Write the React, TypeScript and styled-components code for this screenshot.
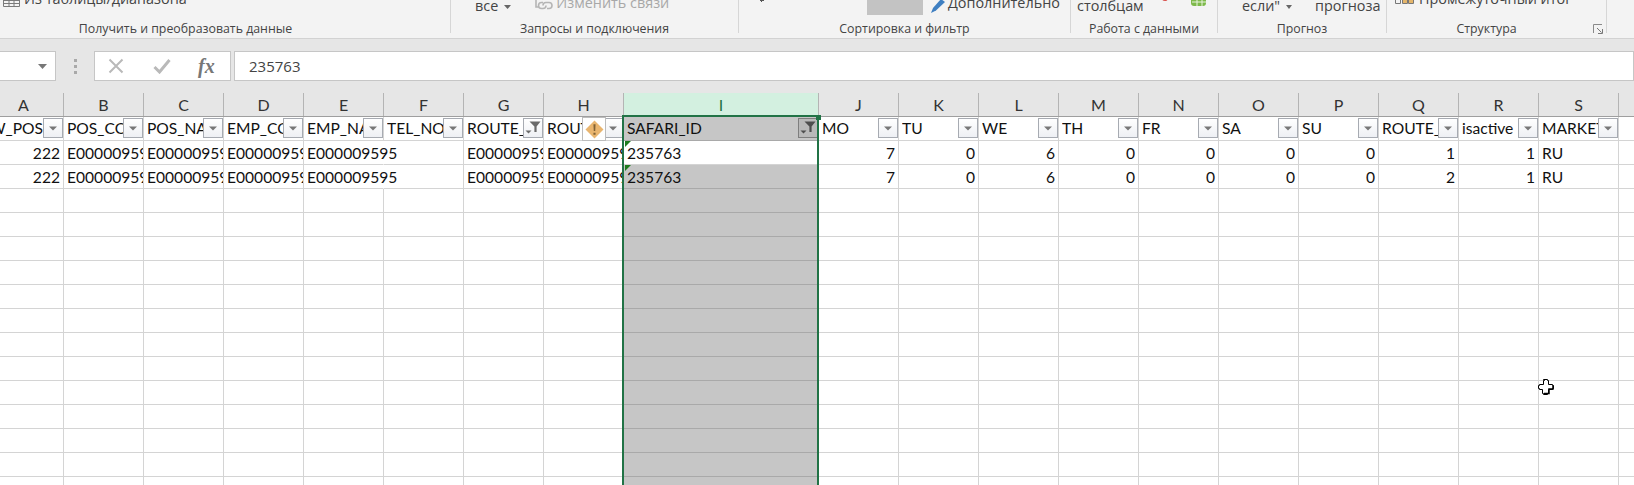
import React from 'react';
import styled, { createGlobalStyle } from 'styled-components';

const Global = createGlobalStyle`
  html, body { margin: 0; padding: 0; background: #fff; overflow: hidden; }
  #root { width: 1634px; height: 485px; overflow: hidden; }
`;

const Page = styled.div`
  width: 1634px;
  height: 485px;
  overflow: hidden;
  display: flex;
  flex-direction: column;
  font-family: "Lato", "Liberation Sans", sans-serif;
`;

/* ---------- ribbon ---------- */
const Ribbon = styled.div`
  flex: none;
  height: 39px;
  box-sizing: border-box;
  background: #f3f3f3;
  border-bottom: 1px solid #d2d2d2;
  display: flex;
  align-items: flex-start;
  overflow: hidden;
  font-family: "Open Sans", "Noto Sans", sans-serif;
  color: #444;
`;

const Group = styled.div<{ $w: number }>`
  flex: none;
  position: relative;
  box-sizing: border-box;
  width: ${(p) => p.$w}px;
  height: 33px;
  display: flex;
  flex-direction: column;
  justify-content: flex-end;
  border-right: 1px solid #d6d6d6;
`;

const GroupRow = styled.div`
  height: 21px;
  flex: none;
  display: flex;
  align-items: flex-end;
  white-space: nowrap;
`;

const GroupLabel = styled.div<{ $pr?: number }>`
  flex: none;
  height: 16px;
  margin-bottom: -4px;
  line-height: 16px;
  font-size: 12.35px;
  text-align: center;
  padding-right: ${(p) => p.$pr ?? 0}px;
`;

const RibbonText = styled.span<{ $ml: number; $mb: number; $muted?: boolean }>`
  margin-left: ${(p) => p.$ml}px;
  margin-bottom: ${(p) => p.$mb}px;
  font-size: 14.4px;
  line-height: 18px;
  color: ${(p) => (p.$muted ? '#a8a8a8' : '#444')};
`;

const RibbonIcon = styled.svg<{ $ml: number; $mb: number }>`
  flex: none;
  display: block;
  margin-left: ${(p) => p.$ml}px;
  margin-bottom: ${(p) => p.$mb}px;
`;

const Swatch = styled.div<{ $ml: number }>`
  flex: none;
  width: 56px;
  height: 30px;
  margin-left: ${(p) => p.$ml}px;
  margin-bottom: 6px;
  background: #c3c3c3;
`;

const Launcher = styled.svg`
  position: absolute;
  left: 206px;
  top: 24px;
`;

/* ---------- formula bar ---------- */
const FormulaArea = styled.div`
  flex: none;
  height: 54px;
  box-sizing: border-box;
  background: #e6e6e6;
  padding-top: 12px;
`;

const FormulaRow = styled.div`
  height: 30px;
  display: flex;
  align-items: stretch;
`;

const FormulaBox = styled.div<{ $w?: number; $ml?: number }>`
  box-sizing: border-box;
  background: #fff;
  border: 1px solid #c6c6c6;
  ${(p) => (p.$w ? `flex: none; width: ${p.$w}px;` : 'flex: 1;')}
  margin-left: ${(p) => p.$ml ?? 0}px;
  display: flex;
  align-items: center;
`;

const NameBox = styled(FormulaBox)`
  border-left: none;
  justify-content: flex-end;
  padding-right: 8px;
`;

const Grip = styled.div`
  flex: none;
  width: 3px;
  margin: 8px 17px 7px 18px;
  background: repeating-linear-gradient(#a9a9a9 0 3px, transparent 3px 6px);
`;

const FormulaButtons = styled(FormulaBox)`
  padding-left: 13px;
  gap: 29px;
`;

const FxGlyph = styled.span`
  font-family: "Liberation Serif", serif;
  font-style: italic;
  font-weight: 700;
  font-size: 20px;
  line-height: 20px;
  color: #777;
  margin-left: -2px;
`;

const FormulaText = styled(FormulaBox)`
  padding-left: 14px;
  font-family: "Open Sans", sans-serif;
  font-size: 15px;
  color: #444;
`;

/* ---------- sheet ---------- */
const COLUMNS = 'repeat(8, 80px) 195px repeat(11, 80px)';

const ColHeaderRow = styled.div`
  flex: none;
  height: 24px;
  box-sizing: border-box;
  margin-left: -16px;
  display: grid;
  grid-template-columns: ${COLUMNS};
  background: #e6e6e6;
  border-bottom: 1px solid #9f9f9f;
`;

const ColHeader = styled.div<{ $active?: boolean }>`
  box-sizing: border-box;
  border-right: 1px solid #b4b4b4;
  padding-bottom: 1px;
  display: flex;
  align-items: center;
  justify-content: center;
  font-size: 16px;
  color: ${(p) => (p.$active ? '#217346' : '#333')};
  background: ${(p) => (p.$active ? '#d3f0e0' : 'transparent')};
`;

const Sheet = styled.div`
  flex: 1;
  position: relative;
  margin-left: -16px;
  display: grid;
  grid-template-columns: ${COLUMNS};
  grid-auto-rows: 24px;
  align-content: start;
  font-size: 15.6px;
  color: #111;
`;

const HeadCell = styled.div<{ $sel?: boolean }>`
  position: relative;
  box-sizing: border-box;
  height: 24px;
  padding-left: 3px;
  display: flex;
  border-right: 1px solid ${(p) => (p.$sel ? '#a9a9a9' : '#d4d4d4')};
  border-bottom: 1px solid ${(p) => (p.$sel ? '#a9a9a9' : '#d4d4d4')};
  background: ${(p) => (p.$sel ? '#c6c6c6' : '#fff')};
`;

const HeadText = styled.span<{ $end?: boolean }>`
  flex: 1;
  min-width: 0;
  overflow: hidden;
  white-space: nowrap;
  line-height: 23px;
  display: flex;
  justify-content: ${(p) => (p.$end ? 'flex-end' : 'flex-start')};
`;

const FilterButton = styled.div<{ $sel?: boolean }>`
  flex: none;
  box-sizing: border-box;
  width: 20px;
  height: 20px;
  margin-top: 1px;
  display: flex;
  align-items: center;
  justify-content: center;
  border: 1px solid ${(p) => (p.$sel ? '#7e7e7e' : '#a7abb2')};
  background: ${(p) => (p.$sel ? '#b9b9b9' : 'linear-gradient(#fff, #eef0f4)')};
`;

const WarnBox = styled.div`
  position: absolute;
  left: 38px;
  top: 0;
  box-sizing: border-box;
  width: 24px;
  height: 24px;
  background: #fff;
  border: 1px solid #bdbdbd;
  display: flex;
  align-items: center;
  justify-content: center;
`;

const Cell = styled.div<{ $right?: boolean; $gray?: boolean; $spill?: boolean; $mark?: boolean }>`
  position: relative;
  box-sizing: border-box;
  height: 24px;
  line-height: 24px;
  padding: 0 3px;
  white-space: nowrap;
  text-align: ${(p) => (p.$right ? 'right' : 'left')};
  background: ${(p) => (p.$gray ? '#c6c6c6' : '#fff')};
  border-bottom: 1px solid ${(p) => (p.$gray ? '#a9a9a9' : '#d4d4d4')};
  ${(p) => (p.$spill ? 'border-right: 1px solid transparent; overflow: visible; z-index: 1; background: transparent;' : `overflow: hidden; border-right: 1px solid ${p.$gray ? '#c6c6c6' : '#d4d4d4'};`)}
  ${(p) =>
    p.$mark
      ? `&::before {
           content: "";
           position: absolute;
           left: 1px;
           top: 0;
           border-top: 6px solid #1c7c1c;
           border-right: 6px solid transparent;
         }`
      : ''}
`;

const SelectionFrame = styled.div`
  position: absolute;
  left: 638px;
  top: -2px;
  width: 197px;
  bottom: -4px;
  box-sizing: border-box;
  border: 2px solid #217346;
  pointer-events: none;
  z-index: 2;
`;

const SelectionHandle = styled.div`
  position: absolute;
  right: -4px;
  top: -2px;
  width: 5px;
  height: 5px;
  background: #217346;
`;

const Cursor = styled.svg`
  position: absolute;
  left: 1554px;
  top: 262px;
  z-index: 3;
`;

const letters = 'ABCDEFGHIJKLMNOPQRST'.split('');
const heads = ['NEW_POS', 'POS_CODE', 'POS_NAME', 'EMP_CODE', 'EMP_NAME', 'TEL_NO', 'ROUTE_CODE', 'ROUTE_NAME', 'SAFARI_ID', 'MO', 'TU', 'WE', 'TH', 'FR', 'SA', 'SU', 'ROUTE_ID', 'isactive', 'MARKET'];
const emp = 'E000009595';

const rowValues = (route: string) => ['222', emp, emp, emp, emp, '', emp, emp, '235763', '7', '0', '6', '0', '0', '0', '0', route, '1', 'RU', ''];
const RIGHT = new Set([0, 9, 10, 11, 12, 13, 14, 15, 16, 17]);

const Arrow = () => (
  <svg width="8" height="5" viewBox="0 0 8 5"><path d="M0 .5h8L4 4.500z" fill="#777" /></svg>
);

const Funnel = ({ dark }: { dark?: boolean }) => (
  <svg width="18" height="18" viewBox="0 0 18 18">
    <path d="M5.500 2.500h11L12.600 7.500V13h-2.200V7.500z" fill={dark ? '#4e4e4e' : '#6b6b6b'} />
    <path d="M1.500 11.500h6L4.500 14.500z" fill={dark ? '#4e4e4e' : '#6b6b6b'} />
  </svg>
);

export default function App() {
  const blanks = Array.from({ length: 14 });
  return (
    <Page>
      <Global />
      <Ribbon>
        <Group $w={451}>
          <GroupRow>
            <RibbonIcon $ml={3} $mb={14} width="17" height="10" viewBox="0 0 17 10">
              <path d="M.5 0v9.500h16V0M.5 3.500h16M.5 6.500h16M6 0v9.500M11 0v9.500" fill="none" stroke="#7a7a7a" />
            </RibbonIcon>
            <RibbonText $ml={4} $mb={13}>Из таблицы/диапазона</RibbonText>
          </GroupRow>
          <GroupLabel $pr={79}>Получить и преобразовать данные</GroupLabel>
        </Group>
        <Group $w={288}>
          <GroupRow>
            <RibbonText $ml={24} $mb={6}>все</RibbonText>
            <RibbonIcon $ml={6} $mb={12} width="7" height="4" viewBox="0 0 7 4"><path d="M0 0h7L3.500 4z" fill="#666" /></RibbonIcon>
            <RibbonIcon $ml={24} $mb={10} width="19" height="14" viewBox="0 0 19 14">
              <path d="M1 0v10h3M8 8.500a3 3 0 0 1 3-3h3a3 3 0 0 1 0 6h-2M11 8.500a3 3 0 0 1-3 3H6.500a3 3 0 0 1 0-6H8" fill="none" stroke="#b5b5b5" strokeWidth="1.600" />
            </RibbonIcon>
            <RibbonText $muted $ml={2} $mb={9}>Изменить связи</RibbonText>
          </GroupRow>
          <GroupLabel>Запросы и подключения</GroupLabel>
        </Group>
        <Group $w={332}>
          <GroupRow>
            <RibbonIcon $ml={21} $mb={19} width="4" height="2" viewBox="0 0 4 2"><path d="M0 0h4v1H2v1H1V1H0z" fill="#555" /></RibbonIcon>
            <Swatch $ml={103} />
            <RibbonIcon $ml={8} $mb={8} width="14" height="14" viewBox="0 0 14 14">
              <path d="M0 14l2-5L10 0l4 3-9 8.500z" fill="#3f7fc1" />
            </RibbonIcon>
            <RibbonText $ml={3} $mb={9}>Дополнительно</RibbonText>
          </GroupRow>
          <GroupLabel>Сортировка и фильтр</GroupLabel>
        </Group>
        <Group $w={147}>
          <GroupRow>
            <RibbonText $ml={6} $mb={6}>столбцам</RibbonText>
            <RibbonIcon $ml={8} $mb={18} width="17" height="6" viewBox="0 0 17 6">
              <path d="M0 2.500h10" stroke="#777" strokeWidth="1" fill="none" />
              <circle cx="13" cy="1" r="2.500" fill="none" stroke="#d9534f" strokeWidth="1.200" />
            </RibbonIcon>
            <RibbonIcon $ml={20} $mb={14} width="19" height="8" viewBox="0 0 19 8">
              <path d="M2 0h15v4a3 3 0 0 1-3 3H5a3 3 0 0 1-3-3z" fill="#7db94a" />
              <path d="M8 0v7M13 0v7M3 3h14" stroke="#e8f3dd" strokeWidth="1" />
            </RibbonIcon>
          </GroupRow>
          <GroupLabel>Работа с данными</GroupLabel>
        </Group>
        <Group $w={169}>
          <GroupRow>
            <RibbonText $ml={24} $mb={6}>если"</RibbonText>
            <RibbonIcon $ml={6} $mb={12} width="6" height="4" viewBox="0 0 6 4"><path d="M0 0h6L3 4z" fill="#666" /></RibbonIcon>
            <RibbonText $ml={23} $mb={6}>прогноза</RibbonText>
          </GroupRow>
          <GroupLabel>Прогноз</GroupLabel>
        </Group>
        <Group $w={220}>
          <GroupRow>
            <RibbonIcon $ml={8} $mb={16} width="19" height="6" viewBox="0 0 19 6">
              <path d="M.5 0v4.500h5V0M7.500 0v4.500h5V0M13.500 0v4.500h5V0" fill="none" stroke="#777" />
              <path d="M8 0h4v4H8zM14 0h4v4h-4z" fill="#e4b56a" />
            </RibbonIcon>
            <RibbonText $ml={5} $mb={13}>Промежуточный итог</RibbonText>
          </GroupRow>
          <GroupLabel $pr={20}>Структура</GroupLabel>
          <Launcher width="10" height="10" viewBox="0 0 10 10">
            <path d="M.5 9V.5H9" fill="none" stroke="#8a8a8a" />
            <path d="M4 4l4.500 4.500M9.500 5v4.500H5" fill="none" stroke="#777" />
          </Launcher>
        </Group>
      </Ribbon>

      <FormulaArea>
        <FormulaRow>
          <NameBox $w={56}>
            <svg width="9" height="5" viewBox="0 0 9 5"><path d="M0 0h9L4.500 5z" fill="#777" /></svg>
          </NameBox>
          <Grip />
          <FormulaButtons $w={137}>
            <svg width="16" height="16" viewBox="0 0 16 16"><path d="M1.500 1.500l13 13M14.500 1.500l-13 13" stroke="#b9b9b9" strokeWidth="2" /></svg>
            <svg width="18" height="16" viewBox="0 0 18 16"><path d="M1.500 9l5 5L16.500 2" fill="none" stroke="#b9b9b9" strokeWidth="3" /></svg>
            <FxGlyph>fx</FxGlyph>
          </FormulaButtons>
          <FormulaText $ml={3}>235763</FormulaText>
        </FormulaRow>
      </FormulaArea>

      <ColHeaderRow>
        {letters.map((l) => (
          <ColHeader key={l} $active={l === 'I'}>{l}</ColHeader>
        ))}
      </ColHeaderRow>

      <Sheet>
        {heads.map((h, i) => (
          <HeadCell key={h} $sel={i === 8}>
            <HeadText $end={i === 0}>{h}</HeadText>
            <FilterButton $sel={i === 8}>
              {i === 6 ? <Funnel /> : i === 8 ? <Funnel dark /> : <Arrow />}
            </FilterButton>
            {i === 7 && (
              <WarnBox>
                <svg width="19" height="19" viewBox="0 0 18 18">
                  <path d="M9 .5L17.500 9 9 17.500.5 9z" fill="#e9b56f" />
                  <path d="M8 4h2l-.3 6.500H8.300zM8 12h2v2H8z" fill="#7f6135" />
                </svg>
              </WarnBox>
            )}
          </HeadCell>
        ))}
        <HeadCell />
        {['1', '2'].map((route, r) =>
          rowValues(route).map((v, i) => (
            <Cell key={`${r}-${i}`} $right={RIGHT.has(i)} $gray={i === 8 && r === 1} $mark={i === 8} $spill={i === 4}>
              {v}
            </Cell>
          ))
        )}
        {blanks.map((_, r) =>
          letters.map((l, i) => <Cell key={`b${r}${l}`} $gray={i === 8} />)
        )}
        <SelectionFrame>
          <SelectionHandle />
        </SelectionFrame>
        <Cursor width="16" height="16" viewBox="0 0 16 16">
          <path d="M5.500.5h4v1h1v4h4v1h1v3h-1v1h-4v4h-1v1h-4v-1h-1v-4h-3v-1h-1v-3h1v-1h4v-4h1z" fill="#fff" stroke="#000" />
          <path d="M15 6.500v3.500h-4v4.500H6" fill="none" stroke="#000" strokeWidth="1.500" />
        </Cursor>
      </Sheet>
    </Page>
  );
}
